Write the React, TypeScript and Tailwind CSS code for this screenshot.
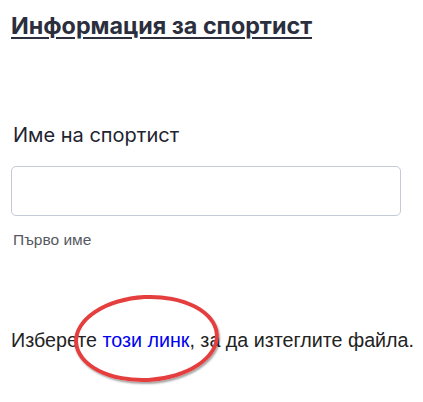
export default function App() {
  return (
    <div className="min-h-[402px] w-[423px] bg-white px-[11px] pt-[10px] font-['Liberation_Sans',Arial,sans-serif]">
      <h1 className="font-['Inter',sans-serif] text-[23.3px] font-bold leading-[32px] text-[#2b2f3d] underline decoration-[1.5px] underline-offset-[3px]">
        Информация за спортист
      </h1>

      <div className="mt-[80px]">
        <label className="block pl-[2px] font-['Inter',sans-serif] text-[20px] leading-[26px] text-[#1f2430]">
          Име на спортист
        </label>
        <input
          type="text"
          className="mt-[18px] block h-[50px] w-[390px] rounded-[5px] border border-[#c4cad6] bg-white px-3 outline-none"
        />
        <div className="mt-[14px] pl-[2px] text-[15.5px] leading-[20px] text-[#55595f]">Първо име</div>
      </div>

      <div className="relative mt-[78px]">
        <p className="whitespace-nowrap text-[19.7px] leading-[24px] text-[#222]">
          Изберете <a href="#" className="text-[#0000ee]">този линк</a>, за да изтеглите файла.
        </p>
        <div className="pointer-events-none absolute left-[63px] top-[-33px] h-[87px] w-[145px] -rotate-3 rounded-[50%] border-[4px] border-[#e53e3e] shadow-[1px_2px_2px_rgba(0,0,0,0.35)]" />
      </div>
    </div>
  );
}
